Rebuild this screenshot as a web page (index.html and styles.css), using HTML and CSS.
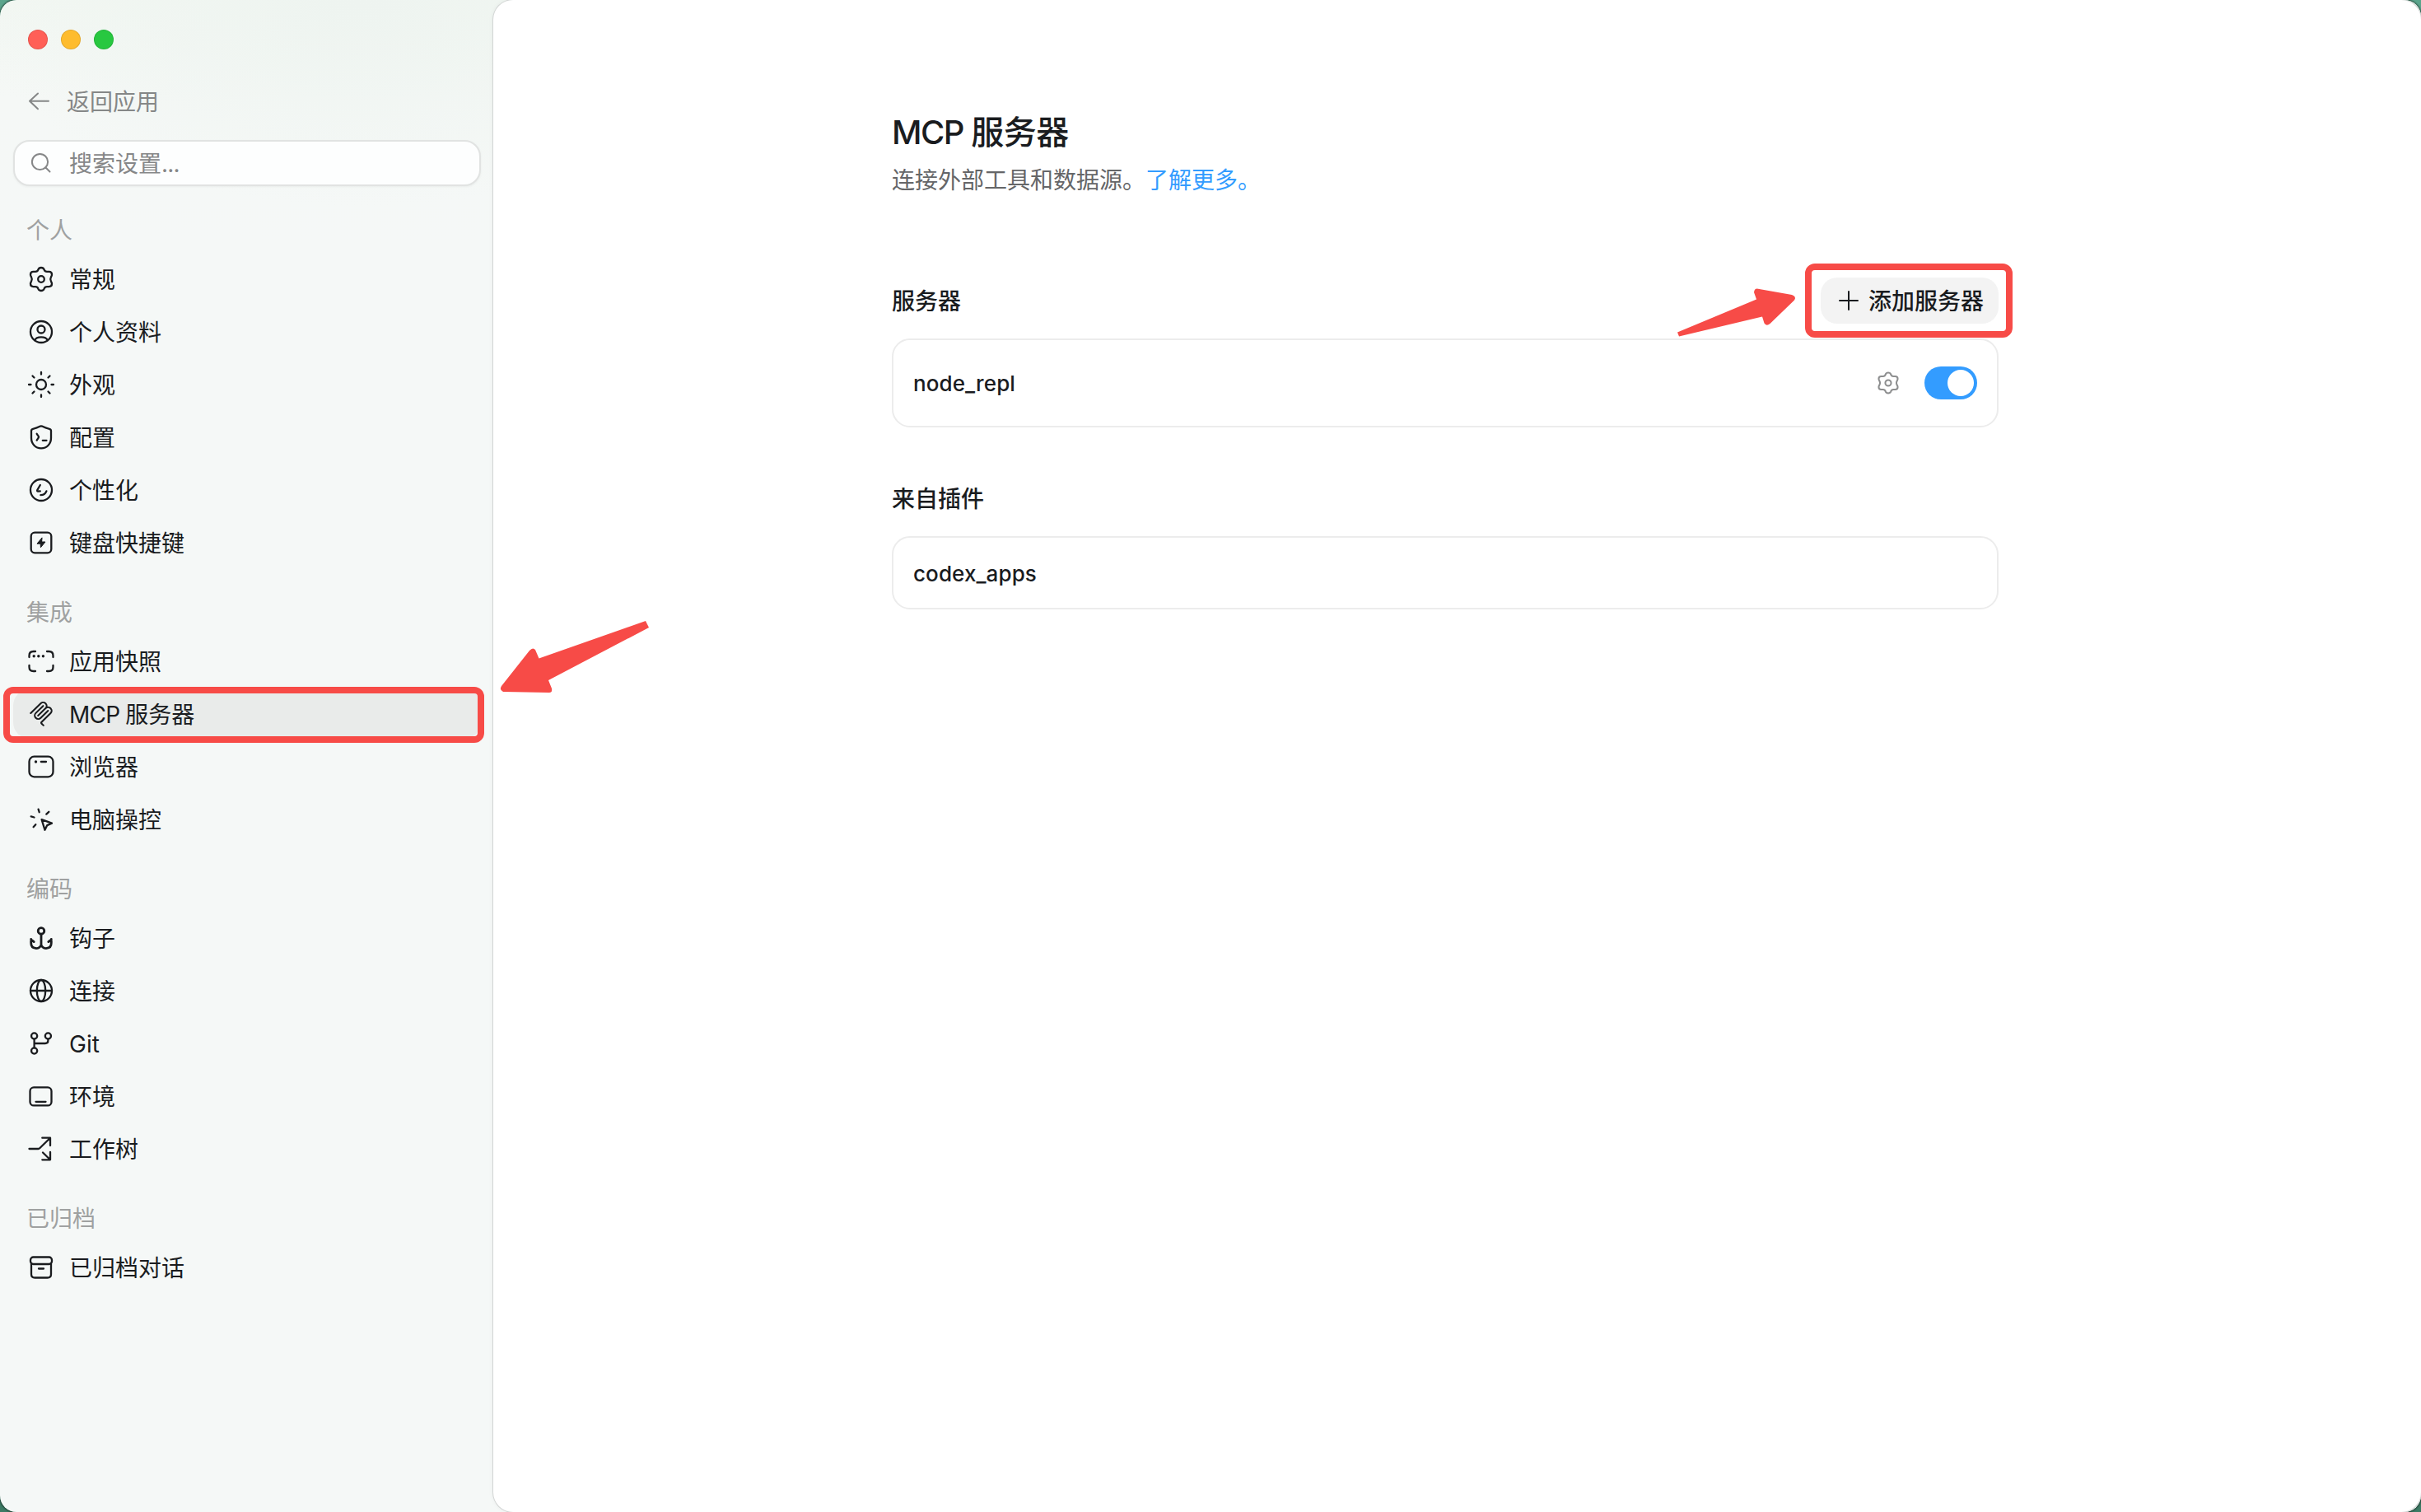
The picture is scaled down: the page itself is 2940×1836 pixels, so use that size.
FILE: index.html
```html
<!DOCTYPE html>
<html lang="zh-CN">
<head>
  <meta charset="UTF-8" />
  <meta name="viewport" content="width=device-width, initial-scale=1.0"/>
  <title>MCP 服务器</title>
  <link rel="stylesheet" href="styles.css">
</head>
<body>
  <div class="window">
    <aside class="sidebar">
      <div class="lights">
        <span class="light red"></span>
        <span class="light yellow"></span>
        <span class="light green"></span>
      </div>

      <a class="back">
        <svg class="icon" viewBox="-18 -18 36 36"><path d="M11-.2H-12M-2-9.500-12-.2-2 9.200"/></svg>
        <span class="text">返回应用</span>
      </a>

      <div class="search">
        <svg class="icon" viewBox="-18 -18 36 36"><circle cx="-1.500" cy="-1.500" r="9.600"/><path d="M5.500 5.500 10.500 10.500"/></svg>
        <span class="text">搜索设置<span class="latin">...</span></span>
      </div>

      <nav class="nav">
        <div class="group">
          <div class="label">个人</div>
          <a class="item">
            <svg class="icon" viewBox="-18 -18 36 36"><path d="M0-14C2-14 3-13.200 3.600-11.600 4.200-9.800 5.200-9.100 7-9.100H9.500C11.400-9.100 13-8 13-5.600 13-4.400 12.600-3.800 12-2.800 11-1 11 1 12 2.800 12.600 3.800 13 4.400 13 5.600 13 8 11.400 9.100 9.500 9.100H7C5.200 9.100 4.200 9.800 3.600 11.600 3 13.200 2 14 0 14-2 14-3 13.200-3.600 11.600-4.200 9.800-5.200 9.100-7 9.100H-9.500C-11.400 9.100-13 8-13 5.600-13 4.400-12.600 3.800-12 2.800-11 1-11-1-12-2.800-12.600-3.800-13-4.400-13-5.600-13-8-11.400-9.100-9.500-9.100H-7C-5.200-9.100-4.200-9.800-3.600-11.600-3-13.200-2-14 0-14Z"/><circle r="3.800"/></svg>
            <span class="text">常规</span>
          </a>
          <a class="item">
            <svg class="icon" viewBox="-18 -18 36 36"><circle r="13"/><circle cy="-3" r="4.500"/><path d="M-7.800 10.200C-5.500 5.200 5.500 5.200 7.800 10.200"/></svg>
            <span class="text">个人资料</span>
          </a>
          <a class="item">
            <svg class="icon" viewBox="-18 -18 36 36"><circle r="6"/><path d="M0-15V-12.500M0 12.500V15M-15 0H-12.500M12.500 0H15M-10.500-10.500-8.500-8.500M8.500 8.500 10.500 10.500M-10.500 10.500-8.500 8.500M8.500-8.500 10.500-10.500"/></svg>
            <span class="text">外观</span>
          </a>
          <a class="item">
            <svg class="icon" viewBox="-18 -18 36 36"><path d="M-1-13.400Q0-13.900 1-13.400C4-11.800 7-10.800 10-10.200Q12-9.700 12-8V.800C12 8 7 13.400 0 13.400S-12 8-12 .800V-8Q-12-9.700-10-10.200C-7-10.800-4-11.800-1-13.400ZM-5.300-4.200-3.200-1.200Q-2.700-.4-3.200.4L-5.300 3.600M1.800 3.800H6.500"/></svg>
            <span class="text">配置</span>
          </a>
          <a class="item">
            <svg class="icon" viewBox="-18 -18 36 36"><circle r="13"/><path d="M-1.200-6-4.600-.2Q-5.500 1.800-3.600 1.600L-1.200 1.400M-.6 6.200C2.800 6.200 5.200 4.600 6.400 1.400"/></svg>
            <span class="text">个性化</span>
          </a>
          <a class="item">
            <svg class="icon" viewBox="-18 -18 36 36"><rect x="-12.300" y="-12.300" width="24.600" height="24.600" rx="4.500"/><path class="solid" d="M.8-5.800-5 1.200H-.8L-.6 5.800 5-1H1Z"/></svg>
            <span class="text">键盘快捷键</span>
          </a>
        </div>

        <div class="group">
          <div class="label">集成</div>
          <a class="item">
            <svg class="icon" viewBox="-18 -18 36 36"><path d="M-14.500-5V-7Q-14.500-12-9.500-12H-7M7-12H9.500Q14.500-12 14.500-7V-5M14.500 5V7Q14.500 12 9.500 12H7M-7 12H-9.500Q-14.500 12-14.500 7V5"/><path class="dots" d="M-8.800-6.300h.01M-3.200-6.300h.01M2.400-6.300h.01"/></svg>
            <span class="text">应用快照</span>
          </a>
          <a class="item active">
            <svg class="icon mcp" viewBox="0 0 24 24"><path d="M15.688 2.343a2.588 2.588 0 00-3.610 0l-9.626 9.440a.863.863 0 01-1.203 0 .823.823 0 010-1.180l9.626-9.440a4.313 4.313 0 016.016 0 4.116 4.116 0 011.204 3.540 4.300 4.300 0 013.609 1.180l.05.05a4.115 4.115 0 010 5.900l-8.706 8.537a.274.274 0 000 .393l1.788 1.754a.823.823 0 010 1.180.863.863 0 01-1.203 0l-1.788-1.753a1.920 1.920 0 010-2.754l8.706-8.538a2.470 2.470 0 000-3.540l-.05-.049a2.588 2.588 0 00-3.607-.003l-7.172 7.034-.002.002-.098.097a.863.863 0 01-1.204 0 .823.823 0 010-1.180l7.273-7.133a2.470 2.470 0 00-.003-3.537z"/><path d="M14.485 4.703a.823.823 0 000-1.180.863.863 0 00-1.204 0l-7.119 6.982a4.115 4.115 0 000 5.900 4.314 4.314 0 006.016 0l7.120-6.982a.823.823 0 000-1.180.863.863 0 00-1.204 0l-7.119 6.982a2.588 2.588 0 01-3.610 0 2.470 2.470 0 010-3.540l7.120-6.982z"/></svg>
            <span class="text"><span class="latin">MCP </span>服务器</span>
            <span class="mark"></span>
          </a>
          <a class="item">
            <svg class="icon" viewBox="-18 -18 36 36"><rect x="-14.500" y="-12.300" width="29" height="24.600" rx="6"/><path d="M-.2-6H6"/><path class="dots" d="M-6.500-6h.01"/></svg>
            <span class="text">浏览器</span>
          </a>
          <a class="item">
            <svg class="icon" viewBox="-18 -18 36 36"><path d="M-3.400-12.300-2.300-8.800M9.300-9.200 6.300-6.400M-12.300-3.600-8.500-2.500M-9.400 9.200-6.700 6.200M.6.2 13 4.600 7.300 7.100 4.500 12.800Z"/></svg>
            <span class="text">电脑操控</span>
          </a>
        </div>

        <div class="group">
          <div class="label">编码</div>
          <a class="item">
            <svg class="icon bold" viewBox="-18 -18 36 36"><circle cy="-8.600" r="3.800"/><path d="M0-4.500V9M-12.300 1.500V6C-12.300 14.200-2 14.200 0 8.500 2 14.200 12.300 14.200 12.300 6V1.500M-12.300 1.800-8.800 4.600M12.300 1.800 8.800 4.600"/></svg>
            <span class="text">钩子</span>
          </a>
          <a class="item">
            <svg class="icon" viewBox="-18 -18 36 36"><circle r="13"/><ellipse rx="5.200" ry="13"/><path d="M-13 0H13"/></svg>
            <span class="text">连接</span>
          </a>
          <a class="item">
            <svg class="icon" viewBox="-18 -18 36 36"><circle cx="-8.400" cy="-9" r="3.600"/><circle cx="8.400" cy="-9" r="3.600"/><circle cx="-8.400" cy="9" r="3.600"/><path d="M-8.400-5.400V5.400M8.400-5.400V-3.500Q8.400 0 4.900 0H-8.400"/></svg>
            <span class="git">Git</span>
          </a>
          <a class="item">
            <svg class="icon" viewBox="-18 -18 36 36"><rect x="-13.500" y="-10.600" width="26" height="22" rx="4.500"/><path d="M-6.500 6.800H5.500"/></svg>
            <span class="text">环境</span>
          </a>
          <a class="item">
            <svg class="icon" viewBox="-18 -18 36 36"><path d="M-14.500 0H-3.500Q-2.500 0-1.800-.7L10.700-13M1.300-13.300H11V-4M2 4.500 10.700 13M1.300 13.300H11V4"/></svg>
            <span class="text">工作树</span>
          </a>
        </div>

        <div class="group">
          <div class="label">已归档</div>
          <a class="item">
            <svg class="icon" viewBox="-18 -18 36 36"><rect x="-13" y="-12.500" width="26" height="8.500" rx="3.500"/><path d="M-12-4.500V8.200Q-12 12.500-7.700 12.500H7.700Q12 12.500 12 8.200V-4.500M-3 1.500H3"/></svg>
            <span class="text">已归档对话</span>
          </a>
        </div>
      </nav>
    </aside>

    <main class="main">
      <div class="content">
        <h1><span class="latin">MCP </span>服务器</h1>
        <p class="desc">连接外部工具和数据源。<a class="link">了解更多。</a></p>

        <div class="section-head">
          <h2>服务器</h2>
          <button class="add-button">
            <svg class="plus" viewBox="-12 -12 24 24"><path d="M-11 0H11M0-11V11"/></svg>
            <span class="text">添加服务器</span>
            <span class="mark"></span>
          </button>
        </div>
        <div class="card server">
          <span class="name">node_repl</span>
          <svg class="icon gear" viewBox="-18 -18 36 36"><path d="M0-14C2-14 3-13.200 3.600-11.600 4.200-9.800 5.200-9.100 7-9.100H9.500C11.400-9.100 13-8 13-5.600 13-4.400 12.600-3.800 12-2.800 11-1 11 1 12 2.800 12.600 3.800 13 4.400 13 5.600 13 8 11.400 9.100 9.500 9.100H7C5.200 9.100 4.200 9.800 3.600 11.600 3 13.200 2 14 0 14-2 14-3 13.200-3.600 11.600-4.200 9.800-5.200 9.100-7 9.100H-9.500C-11.400 9.100-13 8-13 5.600-13 4.400-12.600 3.800-12 2.800-11 1-11-1-12-2.800-12.600-3.800-13-4.400-13-5.600-13-8-11.400-9.100-9.500-9.100H-7C-5.200-9.100-4.200-9.800-3.600-11.600-3-13.200-2-14 0-14Z"/><circle r="4"/></svg>
          <span class="toggle"><span class="knob"></span></span>
        </div>

        <div class="section-head plugins">
          <h2>来自插件</h2>
        </div>
        <div class="card plugin">
          <span class="name">codex_apps</span>
        </div>
      </div>
    </main>

    <svg class="arrow arrow-nav" viewBox="600 740 200 110">
      <path d="M784 754 788 762 666 826 670 836Q671 841 667 841L611 840Q606 838 609 833L643 790Q647 785.500 650 789L654.500 799.500Z"/>
    </svg>
    <svg class="arrow arrow-add" viewBox="2030 345 160 70">
      <path d="M2037 403.500 2133 363.500 2130 355Q2130.500 350 2135 350.700L2176 358Q2182 360 2179 364.500L2149.500 393Q2145 396.500 2142.500 392.500L2140 384.500 2039 408.500Z"/>
    </svg>
  </div>
</body>
</html>
```
FILE: styles.css
```css
* {
  box-sizing: border-box;
}

body {
  margin: 0;
  height: 1836px;
  overflow: hidden;
  background: linear-gradient(to bottom, #5ba58c, #3c7a64);
  font-family: Inter, "Noto Sans CJK SC", sans-serif;
  font-size: 28px;
  color: #1a1c1f;
}

.window {
  position: relative;
  display: flex;
  width: 2940px;
  height: 1836px;
  border-radius: 20px;
  overflow: hidden;
  box-shadow: 0 0 2px 1px rgba(0, 0, 0, 0.6);
  background:
    radial-gradient(ellipse 480px 250px at 440px 0, #eef4f0 0%, rgba(238, 244, 240, 0) 100%),
    linear-gradient(to bottom, #f2f7f2 0, #f5f8f6 120px, #f5f8f7 300px);
}

.sidebar {
  width: 599px;
  padding: 36px 15px 0 16px;
  flex-shrink: 0;
}

.lights {
  display: flex;
  gap: 16px;
  padding-left: 18px;
}

.light {
  width: 24px;
  height: 24px;
  border-radius: 50%;
  border: 1px solid rgba(0, 0, 0, 0.1);
}

.light.red {
  background: #ff5f57;
}

.light.yellow {
  background: #febc2e;
}

.light.green {
  background: #28c840;
}

.icon {
  width: 36px;
  height: 36px;
  flex-shrink: 0;
  fill: none;
  stroke: currentColor;
  stroke-width: 2.3;
  stroke-linecap: round;
  stroke-linejoin: round;
}

.icon .solid {
  fill: currentColor;
  stroke-width: 1;
}

.icon .dots {
  stroke-width: 3.4;
}

.icon.bold {
  stroke-width: 2.8;
}

.icon.mcp {
  width: 30px;
  height: 30px;
  margin: 0 3px;
  fill: currentColor;
  stroke: none;
}

/* CJK glyphs sit a little low in the line box */
.text {
  padding-bottom: 2px;
}

.git {
  padding-top: 2px;
}

.latin {
  letter-spacing: -0.8px;
}

.back {
  display: flex;
  align-items: center;
  height: 60px;
  margin-top: 33px;
  padding-left: 14px;
  gap: 15px;
  color: #858787;
}

.search {
  display: flex;
  align-items: center;
  height: 56px;
  margin-top: 17px;
  padding-left: 14px;
  gap: 16px;
  background: #fdfefe;
  border: 2px solid #e1e3e2;
  border-radius: 20px;
  box-shadow: 0 1px 3px rgba(0, 0, 0, 0.05);
  color: #868788;
}

.back .icon,
.search .icon {
  stroke-width: 2;
}

.nav {
  display: flex;
  flex-direction: column;
  gap: 24px;
  margin-top: 23px;
}

.group {
  display: flex;
  flex-direction: column;
}

.label {
  height: 60px;
  line-height: 60px;
  padding: 1px 0 0 16px;
  color: #9fa1a1;
}

.item {
  position: relative;
  display: flex;
  align-items: center;
  height: 60px;
  padding-left: 16px;
  gap: 16px;
  border-radius: 20px;
}

.item + .item {
  margin-top: 4px;
}

.item.active {
  background: #e9ebea;
}

/* red highlight frames */
.mark {
  position: absolute;
  border: 8px solid #f74b47;
  border-radius: 12px;
}

.item .mark {
  inset: -3px -4px -5px -12px;
}

.main {
  flex: 1;
  display: flex;
  justify-content: center;
  padding-right: 30px;
  background: #fff;
  border-radius: 24px;
  box-shadow: 0 0 0 1px #d2d5d4, 0 0 6px rgba(0, 0, 0, 0.06);
}

.content {
  width: 1344px;
  margin-left: 1px;
  padding-top: 130px;
}

h1 {
  margin: 0;
  height: 60px;
  line-height: 61px;
  font-size: 40px;
  font-weight: 500;
  letter-spacing: -0.4px;
}

h1 .latin {
  letter-spacing: -1.5px;
}

.desc {
  margin: 9px 0 0;
  height: 40px;
  line-height: 40px;
  color: #656668;
}

.link {
  color: #339cff;
}

.section-head {
  display: flex;
  align-items: center;
  justify-content: space-between;
  height: 56px;
  margin-top: 98px;
}

.section-head.plugins {
  margin-top: 58px;
}

h2 {
  margin: 0;
  padding-bottom: 2px;
  font-size: 28px;
  font-weight: 500;
}

.add-button {
  position: relative;
  display: flex;
  align-items: center;
  gap: 12px;
  width: 216px;
  height: 56px;
  padding: 0 0 0 22px;
  border: none;
  border-radius: 20px;
  background: #f3f3f3;
  font: inherit;
  font-weight: 500;
  color: inherit;
  white-space: nowrap;
}

.add-button .mark {
  inset: -17px -17px -17px -19px;
}

.plus {
  width: 24px;
  height: 24px;
  fill: none;
  stroke: currentColor;
  stroke-width: 2;
  stroke-linecap: round;
}

.card {
  display: flex;
  align-items: center;
  padding: 0 24px;
  border: 2px solid #ececec;
  border-radius: 22px;
}

.card.server {
  height: 108px;
  margin-top: 18px;
}

.card.plugin {
  height: 89px;
  margin-top: 18px;
}

.name {
  flex: 1;
  padding-top: 1px;
  font-size: 26px;
  font-weight: 500;
  letter-spacing: 0.1px;
}

.gear {
  width: 32px;
  height: 32px;
  margin-right: 28px;
  color: #8d8e8f;
}

.toggle {
  display: flex;
  justify-content: flex-end;
  width: 64px;
  height: 40px;
  padding: 4px;
  border-radius: 20px;
  background: #339cff;
}

.knob {
  width: 32px;
  height: 32px;
  border-radius: 50%;
  background: #fff;
}

.arrow {
  position: absolute;
  fill: #f74b47;
}

.arrow-nav {
  left: 600px;
  top: 740px;
  width: 200px;
  height: 110px;
}

.arrow-add {
  left: 2030px;
  top: 345px;
  width: 160px;
  height: 70px;
}
```
